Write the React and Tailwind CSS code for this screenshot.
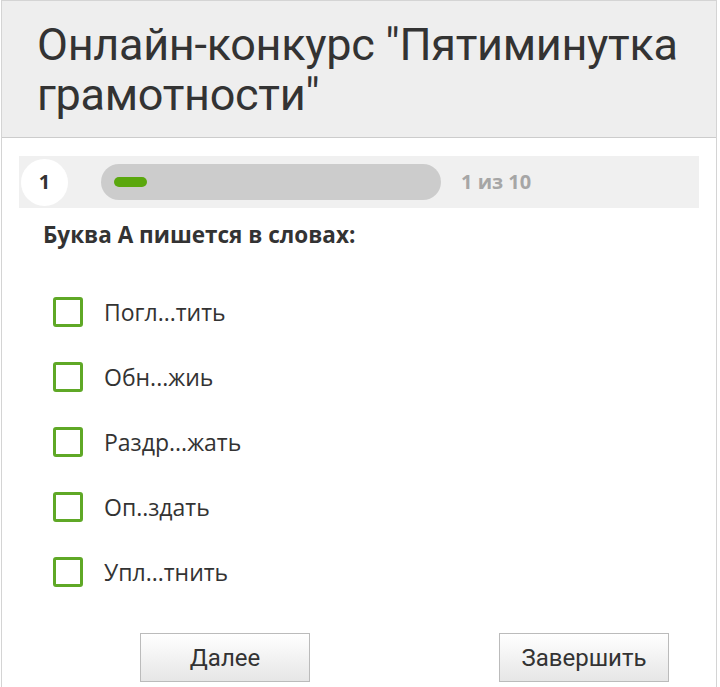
const options = ["Погл...тить", "Обн...жиь", "Раздр...жать", "Оп..здать", "Упл...тнить"];

const App = () => {
    return (
        <div className="w-[720px] h-[687px] overflow-hidden bg-white">
            <div className="h-full w-[716px] border-x border-t border-[#d4d4d4] ml-[1px] flex flex-col">
                <div className="bg-[#eeeeee] border-b border-[#cccccc] h-[137px] pl-[35px] pt-[19px]">
                    <h1 className="text-[45px] leading-[50px] text-[#333333] font-['Roboto',sans-serif] tracking-[-0.3px]">
                        Онлайн-конкурс "Пятиминутка грамотности"
                    </h1>
                </div>

                <div className="mt-[18px] mx-[17px] h-[52px] bg-[#f0f0f0] flex items-center">
                    <div className="ml-[2px] w-[47px] h-[47px] rounded-full bg-white flex items-center justify-center text-[20px] font-bold text-[#333333] font-['Open_Sans',sans-serif]">
                        1
                    </div>
                    <div className="ml-[33px] w-[340px] h-[36px] rounded-full bg-[#cccccc] flex items-center px-[13px]">
                        <div className="w-[33px] h-[10px] rounded-full bg-[#5aa70d]"></div>
                    </div>
                    <span className="ml-[20px] text-[20px] font-bold text-[#a6a6a6] font-['Open_Sans',sans-serif]">1 из 10</span>
                </div>

                <p className="mt-[12px] ml-[41px] text-[22.5px] font-bold text-[#333333] font-['Open_Sans',sans-serif] leading-[30px]">
                    Буква А пишется в словах:
                </p>

                <ul className="mt-[47px] ml-[51px] flex flex-col gap-[35px]">
                    {options.map((o) => (
                        <li key={o} className="flex items-center h-[30px]">
                            <span className="w-[30px] h-[30px] rounded-[3px] border-[3px] border-[#5fa826] bg-white"></span>
                            <span className="ml-[21px] text-[23px] text-[#333333] font-['Open_Sans',sans-serif]">{o}</span>
                        </li>
                    ))}
                </ul>

                <div className="mt-[46px] flex">
                    <button className="ml-[138px] w-[170px] h-[49px] border border-[#bbbbbb] bg-gradient-to-b from-white to-[#e6e6e6] text-[24px] text-[#333333] font-['Roboto',sans-serif]">
                        Далее
                    </button>
                    <button className="ml-[189px] w-[170px] h-[49px] border border-[#bbbbbb] bg-gradient-to-b from-white to-[#e6e6e6] text-[24px] text-[#333333] font-['Roboto',sans-serif]">
                        Завершить
                    </button>
                </div>
            </div>
        </div>
    )
}

export default App;
